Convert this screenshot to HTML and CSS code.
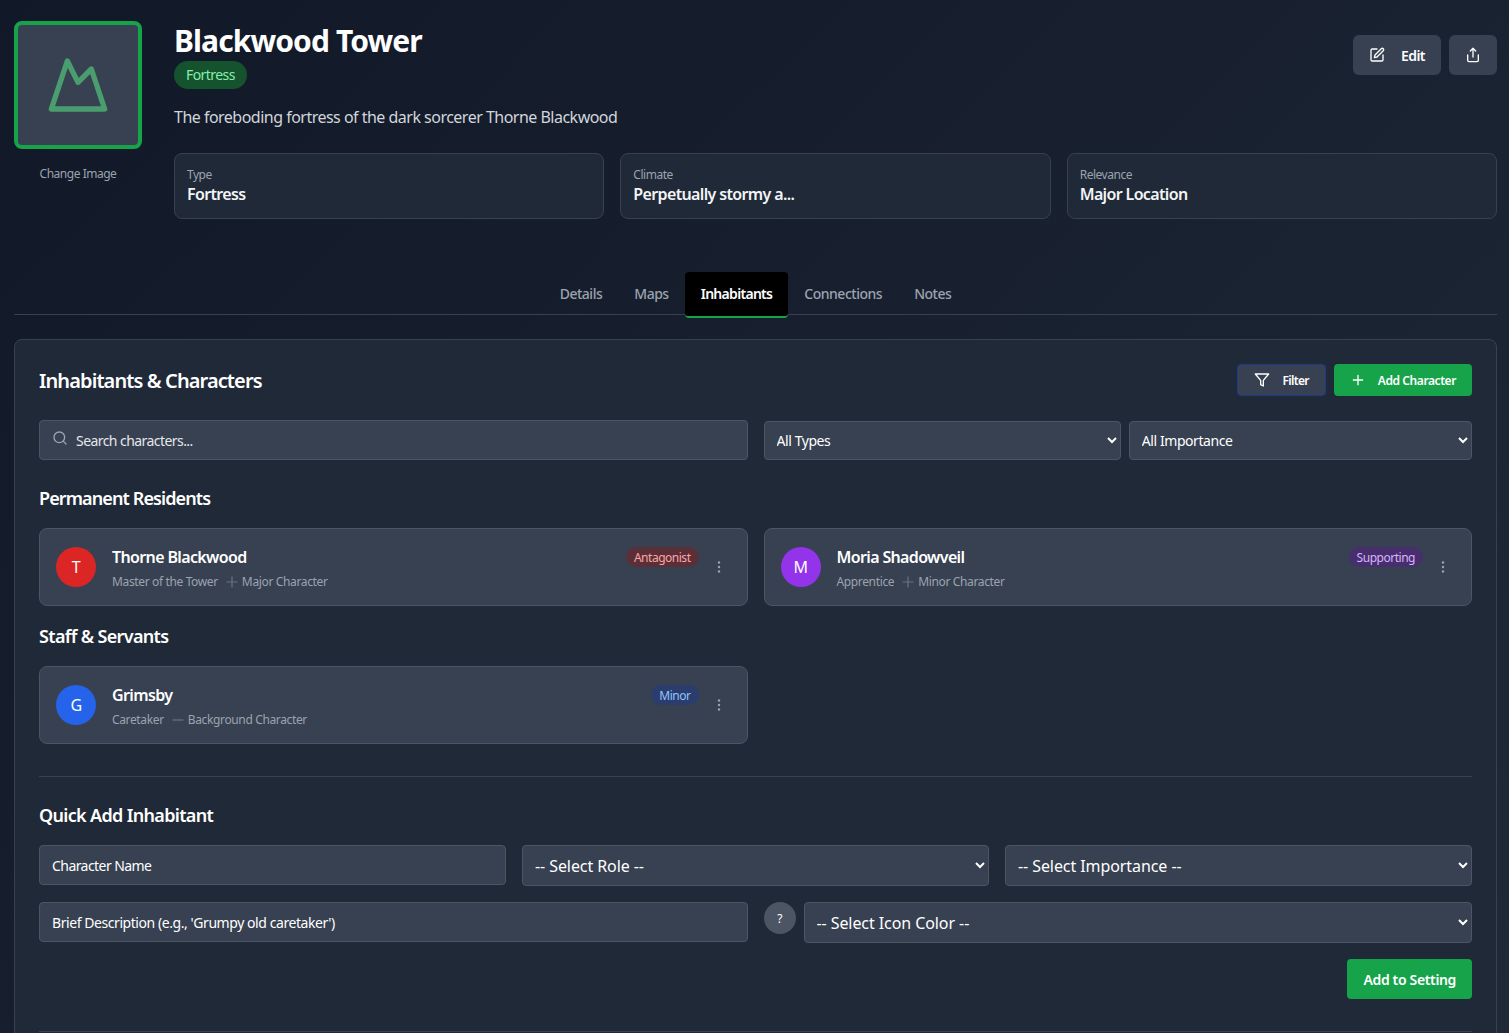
FILE: index.html
```html
<!DOCTYPE html>
<html lang="en">
  <head>
    <meta charset="UTF-8" />
    <meta name="viewport" content="width=device-width, initial-scale=1.0" />
    <title>Blackwood Tower</title>
    <link rel="stylesheet" href="styles.css">
  </head>

  <body>
    <div class="page">
      <header class="header">
        <div class="image-col">
          <div class="image-box">
            <svg width="64" height="64" viewBox="0 0 24 24" fill="none" stroke="#4a9d6e" stroke-width="2" stroke-linecap="round" stroke-linejoin="round"><path d="M8 3l4 8 5-5 5 15H2L8 3z"/></svg>
          </div>
          <div class="change-image">Change Image</div>
        </div>
        <div class="info">
          <div class="title-row">
            <div>
              <h1>Blackwood Tower</h1>
              <span class="type-badge">Fortress</span>
            </div>
            <div class="actions">
              <button class="btn-gray" type="button">
                <svg width="16" height="16" viewBox="0 0 24 24" fill="none" stroke="currentColor" stroke-width="2" stroke-linecap="round" stroke-linejoin="round"><path d="M12 3H5a2 2 0 0 0-2 2v14a2 2 0 0 0 2 2h14a2 2 0 0 0 2-2v-7"/><path d="M18.4 2.6a2.1 2.1 0 0 1 3 3L12 15l-4 1 1-4z"/></svg>
                Edit
              </button>
              <button class="btn-gray btn-icon" type="button">
                <svg width="16" height="16" viewBox="0 0 24 24" fill="none" stroke="currentColor" stroke-width="2" stroke-linecap="round" stroke-linejoin="round"><path d="M4 12v8a2 2 0 0 0 2 2h12a2 2 0 0 0 2-2v-8"/><path d="M16 6l-4-4-4 4"/><path d="M12 2v13"/></svg>
              </button>
            </div>
          </div>
          <p class="description">The foreboding fortress of the dark sorcerer Thorne Blackwood</p>
          <div class="stats">
            <div class="stat"><div class="stat-label">Type</div><div class="stat-value">Fortress</div></div>
            <div class="stat"><div class="stat-label">Climate</div><div class="stat-value">Perpetually stormy a...</div></div>
            <div class="stat"><div class="stat-label">Relevance</div><div class="stat-value">Major Location</div></div>
          </div>
        </div>
      </header>

      <nav class="tabs">
        <a class="tab">Details</a>
        <a class="tab">Maps</a>
        <a class="tab active">Inhabitants</a>
        <a class="tab">Connections</a>
        <a class="tab">Notes</a>
      </nav>

      <section class="panel">
        <div class="panel-head">
          <h2>Inhabitants &amp; Characters</h2>
          <div class="panel-actions">
            <button class="btn-small btn-filter" type="button">
              <svg width="16" height="16" viewBox="0 0 24 24" fill="none" stroke="currentColor" stroke-width="2" stroke-linecap="round" stroke-linejoin="round"><path d="M22 3H2l8 9.5V19l4 2v-8.5z"/></svg>
              Filter
            </button>
            <button class="btn-small btn-add" type="button">
              <svg width="16" height="16" viewBox="0 0 24 24" fill="none" stroke="currentColor" stroke-width="2" stroke-linecap="round"><path d="M12 5v14M5 12h14"/></svg>
              Add Character
            </button>
          </div>
        </div>

        <div class="filters">
          <div class="search">
            <svg class="search-icon" width="16" height="16" viewBox="0 0 24 24" fill="none" stroke="#9ca3af" stroke-width="2" stroke-linecap="round"><circle cx="11" cy="11" r="8"/><path d="M21 21l-4.3-4.3"/></svg>
            <input type="text" placeholder="Search characters..." />
          </div>
          <div class="filter-selects">
            <select class="field"><option>All Types</option></select>
            <select class="field"><option>All Importance</option></select>
          </div>
        </div>

        <h3 class="residents-title">Permanent Residents</h3>
        <div class="cards">
          <div class="card">
            <div class="avatar red">T</div>
            <div class="card-text">
              <div class="card-name">Thorne Blackwood</div>
              <div class="card-sub">
                <span>Master of the Tower</span>
                <svg width="12" height="12" viewBox="0 0 12 12" fill="none" stroke="#6b7280" stroke-width="1.2"><path d="M6 .5v11M.5 6h11"/></svg>
                <span>Major Character</span>
              </div>
            </div>
            <span class="role-badge badge-red">Antagonist</span>
            <svg class="kebab" width="16" height="16" viewBox="0 0 16 16" fill="#9ca3af"><circle cx="8" cy="3.5" r="1.2"/><circle cx="8" cy="8" r="1.2"/><circle cx="8" cy="12.5" r="1.2"/></svg>
          </div>
          <div class="card">
            <div class="avatar purple">M</div>
            <div class="card-text">
              <div class="card-name">Moria Shadowveil</div>
              <div class="card-sub">
                <span>Apprentice</span>
                <svg width="12" height="12" viewBox="0 0 12 12" fill="none" stroke="#6b7280" stroke-width="1.2"><path d="M6 .5v11M.5 6h11"/></svg>
                <span>Minor Character</span>
              </div>
            </div>
            <span class="role-badge badge-purple">Supporting</span>
            <svg class="kebab" width="16" height="16" viewBox="0 0 16 16" fill="#9ca3af"><circle cx="8" cy="3.5" r="1.2"/><circle cx="8" cy="8" r="1.2"/><circle cx="8" cy="12.5" r="1.2"/></svg>
          </div>
        </div>

        <h3 class="staff-title">Staff &amp; Servants</h3>
        <div class="cards">
          <div class="card">
            <div class="avatar blue">G</div>
            <div class="card-text">
              <div class="card-name">Grimsby</div>
              <div class="card-sub">
                <span>Caretaker</span>
                <svg width="12" height="12" viewBox="0 0 12 12" fill="none" stroke="#6b7280" stroke-width="1.2"><path d="M.5 6h11"/></svg>
                <span>Background Character</span>
              </div>
            </div>
            <span class="role-badge badge-blue">Minor</span>
            <svg class="kebab" width="16" height="16" viewBox="0 0 16 16" fill="#9ca3af"><circle cx="8" cy="3.5" r="1.2"/><circle cx="8" cy="8" r="1.2"/><circle cx="8" cy="12.5" r="1.2"/></svg>
          </div>
        </div>

        <hr class="divider" />

        <h3 class="quick-title">Quick Add Inhabitant</h3>
        <div class="quick-row">
          <input class="field" type="text" placeholder="Character Name" />
          <select class="field tall"><option>-- Select Role --</option></select>
          <select class="field tall"><option>-- Select Importance --</option></select>
        </div>
        <div class="quick-row2">
          <input class="field desc-field" type="text" placeholder="Brief Description (e.g., 'Grumpy old caretaker')" />
          <div class="color-row">
            <div class="help-dot">?</div>
            <select class="field tall"><option>-- Select Icon Color --</option></select>
          </div>
        </div>
        <div class="submit-row">
          <button class="btn-submit" type="button">Add to Setting</button>
        </div>

        <hr class="divider" />
      </section>
    </div>
  </body>
</html>
```

FILE: styles.css
```css
* {
  letter-spacing: -0.04em;
}

html,
body {
  margin: 0;
  height: 100%;
  overflow: hidden;
}

body {
  font-family: "Noto Sans", sans-serif;
  background: linear-gradient(135deg, #111827, #1f2937);
  color: #ffffff;
}

.page {
  height: 1033px;
  box-sizing: border-box;
  padding: 21px 12px 0 14px;
  overflow: hidden;
}

button {
  font-family: inherit;
  border: none;
  color: #ffffff;
  display: flex;
  align-items: center;
}

/* header */
.header {
  display: flex;
  gap: 32px;
}

.image-col {
  width: 128px;
  flex: none;
}

.image-box {
  width: 128px;
  height: 128px;
  box-sizing: border-box;
  background-color: #374151;
  border: 4px solid #16a34a;
  border-radius: 8px;
  display: flex;
  align-items: center;
  justify-content: center;
}

.change-image {
  margin-top: 16px;
  text-align: center;
  font-size: 12px;
  line-height: 18px;
  color: #9ca3af;
}

.info {
  flex: 1;
  min-width: 0;
}

.title-row {
  display: flex;
  justify-content: space-between;
  align-items: flex-start;
}

h1 {
  margin: 0;
  font-size: 30px;
  line-height: 40px;
  font-weight: 700;
  letter-spacing: -0.03em;
}

.type-badge {
  display: inline-block;
  padding: 0 12px;
  height: 28px;
  line-height: 28px;
  border-radius: 14px;
  font-size: 14px;
  background-color: #14532d;
  color: #86efac;
}

.actions {
  display: flex;
  gap: 8px;
  margin-top: 14px;
}

.btn-gray {
  height: 40px;
  padding: 0 16px;
  gap: 16px;
  background-color: #374151;
  border-radius: 6px;
  font-size: 14px;
  font-weight: 600;
}

.description {
  margin: 16px 0 0;
  font-size: 16px;
  line-height: 24px;
  letter-spacing: -0.032em;
  color: #d1d5db;
}

.stats {
  display: grid;
  grid-template-columns: 1fr 1fr 1fr;
  gap: 16px;
  margin-top: 24px;
}

.stat {
  height: 66px;
  box-sizing: border-box;
  padding: 12px;
  background-color: #1f2937;
  border: 1px solid #374151;
  border-radius: 8px;
}

.stat-label {
  font-size: 12px;
  line-height: 18px;
  color: #9ca3af;
}

.stat-value {
  font-size: 16px;
  line-height: 21px;
  font-weight: 600;
  color: #f3f4f6;
}

/* tabs */
.tabs {
  display: flex;
  justify-content: center;
  margin-top: 53px;
  height: 42px;
  border-bottom: 1px solid #374151;
}

.tab {
  height: 46px;
  box-sizing: border-box;
  padding: 0 16px 2px;
  border-bottom: 2px solid transparent;
  display: flex;
  align-items: center;
  font-size: 14px;
  font-weight: 500;
  letter-spacing: -0.035em;
  color: #9ca3af;
}

.tab.active {
  background-color: #000000;
  color: #ffffff;
  font-weight: 600;
  letter-spacing: -0.05em;
  border-bottom-color: #16a34a;
  border-radius: 4px;
}

/* panel */
.panel {
  margin-top: 24px;
  padding: 24px;
  background-color: #1f2937;
  border: 1px solid #374151;
  border-radius: 8px;
}

.panel-head {
  display: flex;
  justify-content: space-between;
  align-items: center;
}

h2 {
  margin: 0;
  padding-top: 2px;
  font-size: 20px;
  line-height: 30px;
  font-weight: 600;
  letter-spacing: -0.045em;
}

.panel-actions {
  display: flex;
  gap: 8px;
}

.btn-small {
  height: 32px;
  padding: 0 16px;
  gap: 12px;
  border-radius: 4px;
  font-size: 12px;
  font-weight: 600;
}

.btn-filter {
  background-color: #374151;
  border: 1px solid #1e3a8a;
  letter-spacing: -0.055em;
}

.btn-add {
  background-color: #16a34a;
  letter-spacing: -0.035em;
}

.filters {
  display: grid;
  grid-template-columns: 1fr 1fr;
  gap: 16px;
  margin-top: 24px;
}

.search {
  height: 40px;
  box-sizing: border-box;
  padding: 0 12px;
  display: flex;
  align-items: center;
  gap: 8px;
  background-color: #374151;
  border: 1px solid #4b5563;
  border-radius: 4px;
}

.search-icon {
  margin-top: -4px;
}

.search input {
  flex: 1;
  min-width: 0;
  background: none;
  border: none;
  outline: none;
  padding: 0;
  font-family: inherit;
  font-size: 14px;
}

input::placeholder {
  color: #ffffff;
  opacity: 1;
}

.search input::placeholder {
  color: #e5e7eb;
}

.filter-selects {
  display: grid;
  grid-template-columns: 51fr 49fr;
  gap: 8px;
}

.filter-selects .field {
  height: 39px;
  margin-top: 1px;
  letter-spacing: -0.03em;
}

.field {
  width: 100%;
  height: 40px;
  box-sizing: border-box;
  padding: 0 12px;
  background-color: #374151;
  border: 1px solid #4b5563;
  border-radius: 4px;
  font-family: inherit;
  font-size: 14px;
  color: #ffffff;
  color-scheme: dark;
}

.desc-field {
  letter-spacing: -0.031em;
}

select.field {
  padding: 0 12px 0 8px;
}

.field.tall {
  height: 41px;
  font-size: 16px;
  letter-spacing: -0.005em;
}

h3 {
  margin: 24px 0 16px;
  font-size: 18px;
  line-height: 28px;
  font-weight: 600;
  letter-spacing: -0.037em;
}

.residents-title {
  letter-spacing: -0.05em;
}

.staff-title {
  margin-top: 16px;
}

.cards {
  display: grid;
  grid-template-columns: 1fr 1fr;
  gap: 16px;
}

.card {
  height: 78px;
  box-sizing: border-box;
  padding: 0 16px;
  display: flex;
  align-items: center;
  gap: 16px;
  background-color: #374151;
  border: 1px solid #4b5563;
  border-radius: 8px;
}

.avatar {
  width: 40px;
  height: 40px;
  flex: none;
  border-radius: 50%;
  display: flex;
  align-items: center;
  justify-content: center;
  font-size: 16px;
}

.red { background-color: #dc2626; }
.purple { background-color: #9333ea; }
.blue { background-color: #2563eb; }

.card-text {
  flex: 1;
  min-width: 0;
  padding-top: 2px;
}

.card-name {
  font-size: 16px;
  line-height: 24px;
  font-weight: 600;
}

.card-sub {
  display: flex;
  align-items: center;
  gap: 8px;
  margin-top: 4px;
  font-size: 12px;
  line-height: 18px;
  color: #9ca3af;
}

.card-sub span {
  letter-spacing: -0.03em;
}

.card-sub svg {
  margin-right: -4px;
}

.role-badge {
  align-self: flex-start;
  box-sizing: border-box;
  margin-top: 18px;
  padding: 1px 8px 0;
  height: 20px;
  line-height: 20px;
  border-radius: 10px;
  font-size: 12px;
}

.badge-red { background-color: rgba(127, 29, 29, 0.5); color: #fca5a5; }
.badge-purple { background-color: rgba(88, 28, 135, 0.5); color: #d8b4fe; }
.badge-blue { background-color: rgba(30, 58, 138, 0.5); color: #93c5fd; }

.kebab {
  flex: none;
  margin-left: -4px;
  margin-right: 4px;
}

.divider {
  margin: 32px 0 0;
  border: none;
  border-top: 1px solid #374151;
}

.quick-title {
  margin-top: 24px;
}

.quick-row {
  display: grid;
  grid-template-columns: 1fr 1fr 1fr;
  gap: 16px;
  align-items: start;
}

.quick-row2 {
  display: grid;
  grid-template-columns: 1fr 1fr;
  gap: 16px;
  margin-top: 16px;
  align-items: start;
}

.color-row {
  display: flex;
  gap: 8px;
  align-items: flex-start;
}

.help-dot {
  width: 32px;
  height: 32px;
  flex: none;
  border-radius: 50%;
  background-color: #4b5563;
  display: flex;
  align-items: center;
  justify-content: center;
  font-size: 12px;
}

.submit-row {
  display: flex;
  justify-content: flex-end;
  margin-top: 16px;
}

.btn-submit {
  height: 40px;
  padding: 0 16px;
  background-color: #16a34a;
  border-radius: 4px;
  font-size: 14px;
  font-weight: 600;
  letter-spacing: -0.025em;
}
```
